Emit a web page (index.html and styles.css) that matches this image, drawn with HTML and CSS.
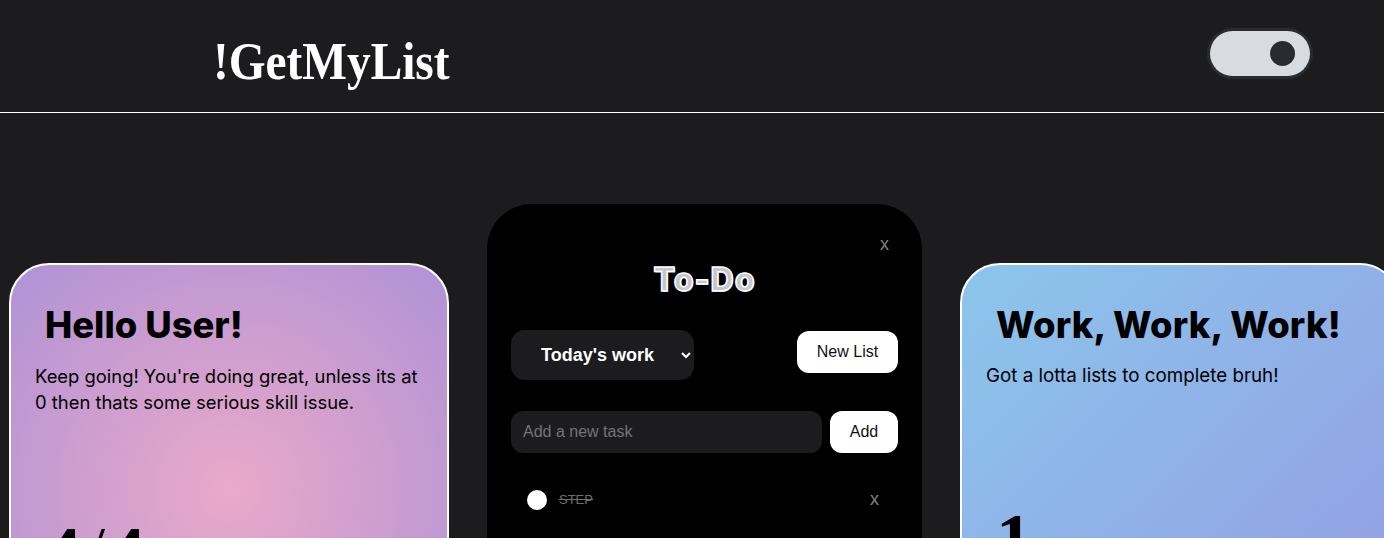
FILE: index.html
```html
<!DOCTYPE html>
<html lang="en">
<head>
    <meta charset="UTF-8">
    <meta name="viewport" content="width=device-width, initial-scale=1.0">
    <title>!GetMyList</title>
    <link rel="stylesheet" href="styles.css">
</head>
<body>
    <header class="topbar">
        <div class="logo">!GetMyList</div>
        <div class="toggle"><span class="knob"></span></div>
    </header>
    <main class="board">
        <section class="card card-hello">
            <h2>Hello User!</h2>
            <p>Keep going! You're doing great, unless its at 0 then thats some serious skill issue.</p>
            <div class="stat">4<span class="slash">/</span>4</div>
        </section>
        <section class="todo">
            <div class="todo-close">x</div>
            <h1>To-Do</h1>
            <div class="list-row">
                <select class="list-select">
                    <option>Today's work</option>
                </select>
                <button class="btn btn-new">New List</button>
            </div>
            <div class="add-row">
                <input class="task-input" type="text" placeholder="Add a new task">
                <button class="btn btn-add">Add</button>
            </div>
            <div class="task">
                <span class="task-dot"></span>
                <span class="task-name">STEP</span>
                <span class="task-x">x</span>
            </div>
        </section>
        <section class="card card-work">
            <h2>Work, Work, Work!</h2>
            <p>Got a lotta lists to complete bruh!</p>
            <div class="stat">1</div>
        </section>
    </main>
</body>
</html>
```

FILE: styles.css
```css
html, body {
    height: 538px;
    overflow: hidden;
}
body {
    margin: 0;
    background-color: #1c1c1e;
    font-family: Arial, "Liberation Sans", sans-serif;
}
.topbar {
    display: flex;
    justify-content: space-between;
    height: 112px;
    padding: 0 74px 0 213px;
    box-sizing: content-box;
    border-bottom: 1px solid #fff;
}
.logo {
    margin-top: 32px;
    font-family: "Liberation Serif", serif;
    font-weight: 700;
    font-size: 52px;
    line-height: 60px;
    color: #fff;
    transform: scaleX(.91);
    transform-origin: left center;
}
.toggle {
    display: flex;
    justify-content: flex-end;
    align-items: center;
    width: 100px;
    height: 45px;
    margin-top: 31px;
    padding-right: 15px;
    box-sizing: border-box;
    border-radius: 23px;
    background-color: #d8dbe0;
    box-shadow: 0 0 0 3px #2a2b30;
}
.knob {
    width: 25px;
    height: 25px;
    border-radius: 50%;
    background-color: #2a2b30;
}
.board {
    display: flex;
    align-items: flex-start;
    gap: 38px;
    width: 1400px;
    padding: 91px 0 0 9px;
}
.card {
    flex: none;
    width: 440px;
    height: 454px;
    margin-top: 59px;
    padding: 0 24px;
    box-sizing: border-box;
    border: 2px solid #fff;
    border-radius: 40px;
    font-family: "Inter", sans-serif;
    color: #000;
}
.card h2 {
    margin: 37px 0 0 10px;
    font-size: 36.4px;
    line-height: 46px;
    font-weight: 800;
    white-space: nowrap;
}
.card p {
    margin: 15px 0 0;
    font-size: 18.4px;
    line-height: 26px;
}
.card-hello {
    background: radial-gradient(circle at center, #eaa9c9 0%, #af92d6 100%);
}
.card-work {
    background: linear-gradient(135deg, #8bc6ec 0%, #9599e2 100%);
}
.card-work h2 {
    letter-spacing: .2px;
}
.card-work p {
    font-size: 18.8px;
}
.stat {
    margin: 110px 0 0 10px;
    font-family: "Liberation Serif", serif;
    font-weight: 700;
    font-size: 72px;
    line-height: 80px;
}
.card-hello .stat {
    margin-top: 97px;
    letter-spacing: -2px;
}
.slash {
    font-weight: 400;
    margin: 0 6px;
}
.todo {
    flex: none;
    position: relative;
    width: 435px;
    height: 600px;
    padding: 60px 24px 0;
    box-sizing: border-box;
    border-radius: 45px;
    background-color: #000;
}
.todo-close {
    position: absolute;
    top: 30px;
    right: 33px;
    font-size: 18px;
    color: #7f8087;
}
.todo h1 {
    margin: 0;
    text-align: center;
    font-family: "Inter", sans-serif;
    font-size: 32px;
    line-height: 32px;
    font-weight: 800;
    letter-spacing: 1px;
    color: #c4c7cc;
    -webkit-text-stroke: 1.5px #fff;
    text-shadow: 1px 1px 0 #7d9cc4;
}
.list-row {
    display: flex;
    justify-content: space-between;
    align-items: flex-start;
    margin-top: 34px;
}
.list-select {
    width: 183px;
    height: 50px;
    padding: 0 0 0 26px;
    border: none;
    border-radius: 14px;
    background-color: #1c1c1e;
    color: #fff;
    font-family: Arial, "Liberation Sans", sans-serif;
    font-size: 18px;
    font-weight: 700;
}
.btn {
    height: 42px;
    border: none;
    border-radius: 12px;
    background-color: #fff;
    color: #111;
    font-family: Arial, "Liberation Sans", sans-serif;
    font-size: 16px;
}
.btn-new {
    width: 101px;
    margin-top: 1px;
}
.btn-add {
    width: 68px;
}
.add-row {
    display: flex;
    gap: 8px;
    margin-top: 31px;
}
.task-input {
    flex: 1;
    min-width: 0;
    height: 42px;
    padding: 0 12px;
    box-sizing: border-box;
    border: none;
    border-radius: 12px;
    background-color: #1c1c1e;
    color: #fff;
    font-family: Arial, "Liberation Sans", sans-serif;
    font-size: 16px;
}
.task-input::placeholder {
    color: #757575;
}
.task {
    display: flex;
    align-items: center;
    margin-top: 36px;
    padding: 0 19px 0 16px;
}
.task-dot {
    width: 20px;
    height: 20px;
    margin-right: 12px;
    border-radius: 50%;
    background-color: #fff;
}
.task-name {
    flex: 1;
    font-size: 13px;
    color: #6f6f6f;
    text-decoration: line-through;
}
.task-x {
    font-size: 18px;
    color: #7f8087;
}
```
